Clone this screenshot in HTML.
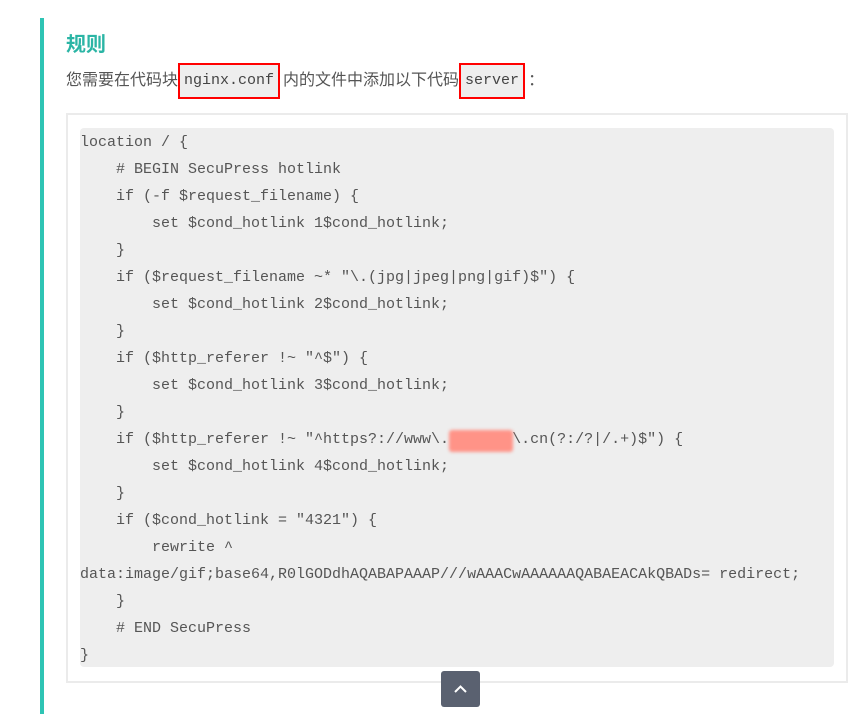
<!DOCTYPE html>
<html><head><meta charset="utf-8"><style>
body{margin:0;width:868px;height:725px;background:#fff;position:relative;overflow:hidden;font-family:"Liberation Sans","Noto Sans CJK SC",sans-serif;}
.bar{position:absolute;left:40px;top:18px;width:4px;height:696px;background:#2ec4b4;}
h2{position:absolute;left:66px;top:31px;margin:0;font-size:20px;font-weight:bold;color:#2bb5a5;line-height:28px;}
.p{position:absolute;left:66px;top:63px;font-size:16px;color:#555;line-height:36px;white-space:nowrap;}
.c{display:inline-block;font-family:"Liberation Mono",monospace;font-size:15px;background:#eee;border:2px solid #f00;padding:4px 4px;line-height:24px;vertical-align:top;color:#444;margin-right:3px;}
.outer{position:absolute;left:66px;top:113px;width:778px;height:566px;border:2px solid #ebebeb;}
.code{position:absolute;left:80px;top:128px;width:754px;height:539px;background:#eee;border-radius:4px;}
pre{margin:0;padding-top:1px;font-family:"Liberation Mono",monospace;font-size:15px;line-height:27px;color:#555;}
.blur{position:absolute;left:449px;top:430px;width:64px;height:22px;background:#ff9387;filter:blur(1.5px);border-radius:3px;}
.btn{position:absolute;left:441px;top:671px;width:39px;height:36px;background:#5a6170;border-radius:3px;}
</style></head><body>
<div class="bar"></div>
<h2>规则</h2>
<div class="p">您需要在代码块<span class="c">nginx.conf</span>内的文件中添加以下代码<span class="c">server</span>：</div>
<div class="outer"></div>
<div class="code"><pre>location / {
    # BEGIN SecuPress hotlink
    if (-f $request_filename) {
        set $cond_hotlink 1$cond_hotlink;
    }
    if ($request_filename ~* "\.(jpg|jpeg|png|gif)$") {
        set $cond_hotlink 2$cond_hotlink;
    }
    if ($http_referer !~ "^$") {
        set $cond_hotlink 3$cond_hotlink;
    }
    if ($http_referer !~ "^https?://www\.       \.cn(?:/?|/.+)$") {
        set $cond_hotlink 4$cond_hotlink;
    }
    if ($cond_hotlink = "4321") {
        rewrite ^
data:image/gif;base64,R0lGODdhAQABAPAAAP///wAAACwAAAAAAQABAEACAkQBADs= redirect;
    }
    # END SecuPress
}</pre></div>
<div class="blur"></div>
<div class="btn"><svg width="39" height="36" viewBox="0 0 39 36"><path d="M14 21 L19.5 15.5 L25 21" fill="none" stroke="#fff" stroke-width="2"/></svg></div>
</body></html>
